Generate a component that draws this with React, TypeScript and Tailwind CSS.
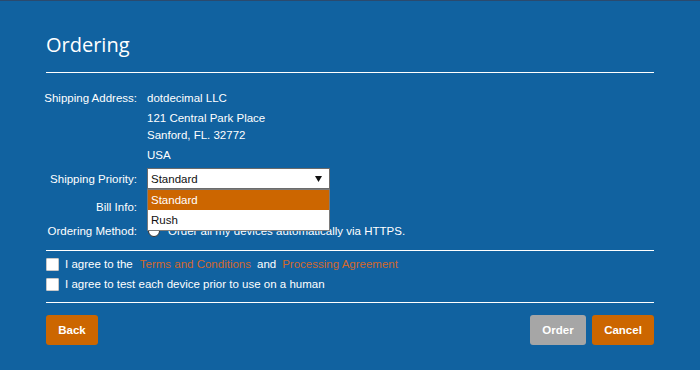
import React from "react";

const sans = { fontFamily: '"Liberation Sans", Arial, sans-serif' };

function Label({ children }: { children: React.ReactNode }) {
  return <div className="w-[111px] -ml-[20px] shrink-0 text-right whitespace-nowrap">{children}</div>;
}

export default function App() {
  return (
    <div
      className="w-[700px] h-[370px] bg-[#1162a0] border-t border-[#2b4a6e] text-white text-[11.5px] leading-[20px] px-[46px] overflow-hidden"
      style={sans}
    >
      <div
        className="pt-[31px] h-[71px] text-[20px] leading-[26px]"
        style={{ fontFamily: '"Open Sans", sans-serif' }}
      >
        Ordering
      </div>
      <div className="h-px bg-white" />

      <div className="mt-[15px] flex gap-[10px]">
        <Label>Shipping Address:</Label>
        <div className="flex flex-col">
          <div className="h-[20px]">dotdecimal LLC</div>
          <div className="h-[17px]">121 Central Park Place</div>
          <div className="h-[20px]">Sanford, FL. 32772</div>
          <div className="h-[20px]">USA</div>
        </div>
      </div>

      <div className="mt-[3px] flex gap-[10px] items-center h-[21px]">
        <Label>Shipping Priority:</Label>
        <div className="relative z-10 w-[183px] h-[21px]">
          <div className="h-[21px] bg-white border border-[#6b6b6b] text-[#111] flex items-center justify-between pl-[3px] pr-[7px]">
            <span>Standard</span>
            <svg width="7" height="6" viewBox="0 0 7 6">
              <path d="M0 0 H7 L3.5 6 Z" fill="#111" />
            </svg>
          </div>
          <div className="absolute left-0 top-[21px] w-full bg-white border border-[#7a7a7a] text-[#111]">
            <div className="h-[20px] bg-[#cc6600] text-white pl-[3px]">Standard</div>
            <div className="h-[20px] pl-[3px]">Rush</div>
          </div>
        </div>
      </div>

      <div className="mt-[8px] flex gap-[10px] h-[20px]">
        <Label>Bill Info:</Label>
        <div />
      </div>

      <div className="mt-[4px] flex gap-[10px] h-[20px] items-center">
        <Label>Ordering Method:</Label>
        <div className="flex items-center gap-[8px]">
          <div className="ml-px w-[12px] h-[12px] rounded-full bg-white border border-[#333]" />
          <span>Order all my devices automatically via HTTPS.</span>
        </div>
      </div>

      <div className="mt-[9px] h-px bg-white" />

      <div className="mt-[3px] flex items-center h-[20px]">
        <div className="w-[13px] h-[13px] bg-white border border-[#c8c8c8] rounded-[1px]" />
        <span className="ml-[6px]">I agree to the</span>
        <span className="ml-[7px] text-[#d2682c]">Terms and Conditions</span>
        <span className="ml-[6px]">and</span>
        <span className="ml-[6px] text-[#d2682c]">Processing Agreement</span>
      </div>
      <div className="flex items-center h-[20px]">
        <div className="w-[13px] h-[13px] bg-white border border-[#c8c8c8] rounded-[1px]" />
        <span className="ml-[6px]">I agree to test each device prior to use on a human</span>
      </div>

      <div className="mt-[8px] h-px bg-white" />

      <div className="mt-[12px] flex items-center">
        <button className="h-[30px] w-[52px] rounded-[3px] bg-[#cc6600] text-white font-bold text-[11.5px]">
          Back
        </button>
        <div className="flex-1" />
        <button className="h-[30px] w-[56px] rounded-[3px] bg-[#a6a6a6] text-white font-bold text-[11.5px]">
          Order
        </button>
        <button className="ml-[6px] h-[30px] w-[62px] rounded-[3px] bg-[#cc6600] text-white font-bold text-[11.5px]">
          Cancel
        </button>
      </div>
    </div>
  );
}
